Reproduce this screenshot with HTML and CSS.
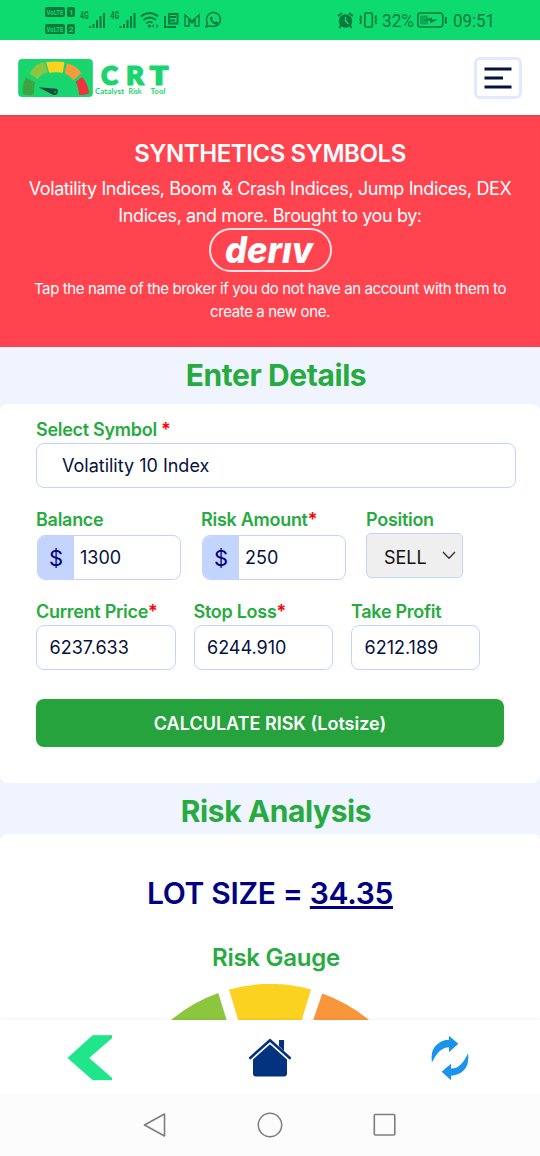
FILE: index.html
```html
<!DOCTYPE html>
<html lang="en">
<head>
  <meta charset="UTF-8">
  <meta name="viewport" content="width=device-width, initial-scale=1.0">
  <title>CRT - Catalyst Risk Tool</title>
  <link rel="stylesheet" href="styles.css">
</head>
<body>
  <div class="status-bar">
    <svg class="status-left" viewBox="0 0 230 40">
      <g fill="#087a3d">
        <rect x="45" y="7" width="20" height="10" rx="2"/>
        <rect x="67" y="7" width="8" height="10" rx="2"/>
        <rect x="45" y="24" width="20" height="10" rx="2"/>
        <rect x="67" y="24" width="8" height="10" rx="2"/>
      </g>
      <g class="volte">
        <text x="46.5" y="15" textLength="17" lengthAdjust="spacingAndGlyphs">VoLTE</text>
        <text x="69" y="15">1</text>
        <text x="46.5" y="32" textLength="17" lengthAdjust="spacingAndGlyphs">VoLTE</text>
        <text x="69" y="32">2</text>
      </g>
      <g class="net">
        <text x="80" y="19" textLength="8.5" lengthAdjust="spacingAndGlyphs">4G</text>
        <text x="110.500" y="19" textLength="8.5" lengthAdjust="spacingAndGlyphs">4G</text>
      </g>
      <path d="M90 28v-2M93.500 28v-4M97 28v-8M100.500 28v-12M104 28v-15M120.500 28v-2M124 28v-4M127.500 28v-8M131 28v-12M134.500 28v-15" stroke="#087a3d" stroke-width="2"/>
      <g fill="none" stroke="#087a3d" stroke-width="1.8">
        <path d="M141 16.500Q149.500 9.500 158 16.500M143.500 20Q149.500 15 156 20M146 23.500Q149.500 20.800 152.500 22.800"/>
        <path d="M165 16v11h11"/>
        <path d="M169 14h8.500v9.500H169z"/>
        <path d="M170 17h6M170 20.500h5"/>
        <path d="M185 26V15l7 6 7-6v11h-4v-6l-3 3-3-3v6z" stroke-width="1.300"/>
        <path d="M206 27l1.400-4a7 7 0 1 1 3 2.800z" stroke-width="1.400"/>
      </g>
      <circle cx="149.500" cy="26" r="1.600" fill="#087a3d"/>
      <path d="M152 26l2-2v4zM158.500 26l-2-2v4z" fill="#087a3d"/>
      <path d="M210 17.500l1.500-1 1.500 2-1 1.200q1 1.800 3 2.600l1.200-1 2 1.300-1 1.900q-2 .6-4.800-1.500-2.800-2.400-2.400-5.500z" fill="#087a3d"/>
    </svg>
    <svg class="status-right" viewBox="330 0 170 40">
      <circle cx="345.500" cy="21" r="6.800" fill="#087a3d"/>
      <path d="M338 16l4-3M353 16l-4-3M341 25l-1.500 3M350 25l1.500 3" stroke="#087a3d" stroke-width="1.800"/>
      <path d="M345.500 17v4l3 3" fill="none" stroke="#0ddb6f" stroke-width="1.400"/>
      <g fill="none" stroke="#087a3d" stroke-width="1.600">
        <rect x="364.800" y="13" width="7.500" height="14" rx="1.200"/>
        <path d="M360 15.500l1.200 2-1.200 2 1.200 2-1.200 2.500M376.500 15.500l-1.200 2 1.200 2-1.200 2 1.200 2.500"/>
        <rect x="417.800" y="13" width="25" height="14" rx="3"/>
      </g>
      <rect x="420" y="15.500" width="8" height="9" rx="1" fill="#0aa954"/>
      <path d="M423 20.500l9-3v2h6l-8 3.800.5-2.800z" fill="#087a3d"/>
      <rect x="444.800" y="17" width="2" height="6.500" fill="#087a3d"/>
      <text class="status-text" x="382" y="27" textLength="32" lengthAdjust="spacingAndGlyphs">32%</text>
      <text class="status-text" x="453" y="27" textLength="42" lengthAdjust="spacingAndGlyphs">09:51</text>
    </svg>
  </div>

  <header class="header">
    <a class="logo" href="#">
      <svg class="logo-gauge" viewBox="54 177 224 114">
        <rect x="54" y="177" width="224" height="114" rx="12" fill="#18d66d"/>
        <path d="M77 233l28 14q-3 12-4 35-12 8-32 0-6-22 8-49z" fill="#3fa33f"/>
        <path d="M109 195q11-6 23-8l11 29q-18 5-30 21l-25-16q7-14 21-26z" fill="#8cc541"/>
        <path d="M138 186q28-3 55 0l-5 32q-20-3-41 0z" fill="#fbd221"/>
        <path d="M200 190q28 7 44 29l-24 22q-10-14-26-21z" fill="#f9993e"/>
        <path d="M246 231q18 22 21 49-12 8-30 4-1-20-10-39z" fill="#f0323d"/>
        <path d="M115 262l55 4q6 5 3 13-4 9-15 5z" fill="#1d4a43"/>
        <circle cx="165" cy="276" r="4" fill="#1e8c57"/>
      </svg>
      <svg class="logo-name" viewBox="0 0 78 40">
        <g class="crt">
          <text x="8" y="27" textLength="17" lengthAdjust="spacingAndGlyphs">C</text>
          <text x="33" y="27" textLength="18" lengthAdjust="spacingAndGlyphs">R</text>
          <text x="56.500" y="27" textLength="19" lengthAdjust="spacingAndGlyphs">T</text>
        </g>
        <g class="tagline">
          <text x="2" y="35.500" textLength="29" lengthAdjust="spacingAndGlyphs">Catalyst</text>
          <text x="35.500" y="35.500" textLength="13" lengthAdjust="spacingAndGlyphs">Risk</text>
          <text x="57.500" y="35.500" textLength="15" lengthAdjust="spacingAndGlyphs">Tool</text>
        </g>
      </svg>
    </a>
    <button class="menu-btn" aria-label="Menu">
      <svg width="28" height="24" viewBox="0 0 28 24"><path d="M0.500 3h27M0.500 12h18.500M0.500 21h27" stroke="#06113c" stroke-width="3"/></svg>
    </button>
  </header>

  <main class="content">
    <section class="broker">
      <h2>SYNTHETICS SYMBOLS</h2>
      <p class="lead">Volatility Indices, Boom &amp; Crash Indices, Jump Indices, DEX Indices, and more. Brought to you by:</p>
      <a class="deriv" href="#" aria-label="deriv">
        <svg width="104" height="40" viewBox="0 0 104 40"><text x="7" y="32.500" textLength="88" lengthAdjust="spacingAndGlyphs">derıv</text></svg>
      </a>
      <p class="note">Tap the name of the broker if you do not have an account with them to create a new one.</p>
    </section>

    <h1 class="section-title">Enter Details</h1>
    <form class="card details">
      <div class="field">
        <label>Select Symbol <span class="req">*</span></label>
        <div class="input symbol">Volatility 10 Index</div>
      </div>
      <div class="row row-money">
        <div class="field">
          <label>Balance</label>
          <div class="input money"><span class="dollar">$</span><span>1300</span></div>
        </div>
        <div class="field">
          <label>Risk Amount<span class="req">*</span></label>
          <div class="input money"><span class="dollar">$</span><span>250</span></div>
        </div>
        <div class="field">
          <label>Position</label>
          <div class="input position">SELL
            <svg width="14" height="9" viewBox="0 0 14 9"><path d="M1 1l6 6.300L13 1" fill="none" stroke="#333" stroke-width="1.300"/></svg>
          </div>
        </div>
      </div>
      <div class="row row-price">
        <div class="field">
          <label>Current Price<span class="req">*</span></label>
          <div class="input">6237.633</div>
        </div>
        <div class="field">
          <label>Stop Loss<span class="req">*</span></label>
          <div class="input">6244.910</div>
        </div>
        <div class="field">
          <label>Take Profit</label>
          <div class="input">6212.189</div>
        </div>
      </div>
      <button class="calc-btn" type="button">CALCULATE RISK (Lotsize)</button>
    </form>

    <h1 class="section-title analysis-title">Risk Analysis</h1>
    <section class="card analysis">
      <h2 class="lot">LOT SIZE = <u>34.35</u></h2>
      <h3 class="gauge-title">Risk Gauge</h3>
      <svg class="gauge" width="310" height="155" viewBox="0 0 310 155">
        <path d="M56 36A155 155 0 0 1 103.300 9L126 83 100 100z" fill="#8cc63f"/>
        <path d="M114 5.500A155 155 0 0 1 196 5.500L173 82h-36z" fill="#fbd220"/>
        <path d="M207.300 9.500A155 155 0 0 1 254 36L210 100l-28-17z" fill="#f9963c"/>
      </svg>
    </section>
  </main>

  <nav class="bottom-nav">
    <a href="#" aria-label="Back">
      <svg width="46" height="46" viewBox="203 75 136 136"><path d="M279 76h57v8l-68 59 68 59v6h-57l-74-65z" fill="#20e58b" stroke="#20e58b" stroke-linejoin="round"/></svg>
    </a>
    <a class="home" href="#" aria-label="Home">
      <svg width="42" height="40" viewBox="0 0 42 40">
        <path d="M21 5.500L38 20v15.500q0 3-3 3H7q-3 0-3-3V20z" fill="#023280"/>
        <path d="M1.200 20L21 2.200 40.800 20" fill="none" stroke="#fff" stroke-width="6"/>
        <path d="M30 8V2h5v11z" fill="#023280"/>
        <path d="M1.200 20L21 2.200 40.800 20" fill="none" stroke="#023280" stroke-width="2.600" stroke-linecap="round" stroke-linejoin="round"/>
      </svg>
    </a>
    <a href="#" aria-label="Refresh">
      <svg width="38" height="46" viewBox="484 75 114 137"><path d="M487 157q-6-37 15-54 15-14 36-14V77l28 24-28 25v-15q-30 0-51 46zM595 129q5 35-14 53-15 14-37 15v13l-28-25 28-24v14q30 1 51-46z" fill="#1b93ec"/></svg>
    </a>
  </nav>

  <div class="system-nav">
    <svg width="24" height="26" viewBox="0 0 24 26"><path d="M21.500 2v22L1.500 13z" fill="none" stroke="#7d7d7d" stroke-width="1.600" stroke-linejoin="round"/></svg>
    <svg width="26" height="26" viewBox="0 0 26 26"><circle cx="13" cy="13" r="11.700" fill="none" stroke="#7d7d7d" stroke-width="1.500"/></svg>
    <svg width="24" height="24" viewBox="0 0 24 24"><rect x="1.300" y="1.500" width="20.500" height="20.500" rx="1" fill="none" stroke="#7d7d7d" stroke-width="1.600"/></svg>
  </div>
</body>
</html>
```
FILE: styles.css
```css
* {
  box-sizing: border-box;
  margin: 0;
  padding: 0;
}

body {
  display: flex;
  flex-direction: column;
  height: 1156px;
  overflow: hidden;
  font-family: Inter, "Liberation Sans", sans-serif;
  background: #f0f4ff;
  color: #06113c;
}

svg {
  display: block;
}

.status-bar {
  display: flex;
  justify-content: space-between;
  flex: none;
  height: 40px;
  padding-right: 40px;
  background: #0ddb6f;
}

.status-left {
  width: 230px;
  height: 40px;
}

.status-right {
  width: 170px;
  height: 40px;
}

.volte text {
  font: bold 8px Roboto, sans-serif;
  fill: #0ddb6f;
}

.net text {
  font: bold 10px Roboto, sans-serif;
  fill: #087a3d;
}

.status-text {
  font: 17.5px Roboto, sans-serif;
  fill: #087a3d;
}

.header {
  display: flex;
  justify-content: space-between;
  align-items: center;
  flex: none;
  height: 75px;
  padding: 0 18px;
  background: #fff;
}

.logo {
  display: flex;
  align-items: center;
}

.logo-gauge {
  width: 75px;
  height: 38px;
}

.logo-name {
  width: 78px;
  height: 40px;
}

.crt text {
  font: 800 27px Lato, sans-serif;
  fill: #18d66d;
  stroke: #18d66d;
  stroke-width: 1.2;
  stroke-linejoin: round;
}

.tagline text {
  font: bold 6.5px Lato, sans-serif;
  fill: #18d66d;
}

.menu-btn {
  display: flex;
  align-items: center;
  justify-content: center;
  width: 48px;
  height: 42px;
  border: 3px solid #e1e9ff;
  border-radius: 6px;
  background: #fff;
}

.content {
  flex: 1;
  min-height: 0;
  overflow: hidden;
}

.broker {
  display: flex;
  flex-direction: column;
  align-items: center;
  height: 232px;
  padding: 20px 24px 0;
  background: #ff444f;
  box-shadow: inset 0 2px 2px -1px #d8404c;
  color: #fff;
  text-align: center;
}

.broker h2 {
  font-size: 24px;
  font-weight: 600;
  line-height: 38px;
  letter-spacing: -0.43px;
}

.lead {
  padding-top: 2px;
  font-size: 18px;
  line-height: 27px;
  letter-spacing: -0.4px;
}

.deriv {
  display: flex;
  align-items: center;
  justify-content: center;
  width: 123px;
  height: 44px;
  margin-top: -1px;
  border: 2px solid rgba(255, 255, 255, 0.85);
  border-radius: 22px;
}

.deriv text {
  font: italic 800 37px Inter, sans-serif;
  fill: #fff;
}

.note {
  padding-top: 6px;
  font-size: 15px;
  line-height: 22.5px;
  letter-spacing: -0.37px;
}

.section-title {
  height: 57px;
  padding-left: 12px;
  color: #27ab40;
  font-size: 30px;
  font-weight: 700;
  line-height: 57px;
  letter-spacing: -0.42px;
  text-align: center;
}

.card {
  border-radius: 8px;
  background: #fff;
}

.details {
  height: 379px;
  padding: 12px 24px 0 36px;
}

label {
  display: block;
  height: 27px;
  color: #27ab40;
  font-size: 18px;
  font-weight: 600;
  line-height: 27px;
  letter-spacing: -0.28px;
}

.req {
  color: #f00;
}

.input {
  display: flex;
  align-items: center;
  height: 45px;
  padding: 0 12px 0 13px;
  border: 1.5px solid #c3d4fc;
  border-radius: 8px;
  font-size: 18px;
}

.symbol {
  padding-left: 25px;
}

.row {
  display: grid;
  margin-top: 18px;
}

.row-money {
  grid-template-columns: 145px 145px 97px;
  column-gap: 20px;
}

.row-money .money {
  margin: 2px 0 0 1px;
  padding: 0;
  gap: 6px;
  overflow: hidden;
}

.dollar {
  display: flex;
  align-items: center;
  justify-content: center;
  width: 36px;
  height: 45px;
  background: #c3d4ff;
  color: #000080;
  font-size: 22px;
}

.position {
  justify-content: space-between;
  padding: 4px 6px 0 17px;
  border-radius: 5px;
  background: #efefef;
  color: #111;
}

.position svg {
  margin-top: -5px;
}

.row-price {
  grid-template-columns: 139.500px 139.500px 129px;
  column-gap: 18px;
}

.row-price .input {
  padding-left: 12.5px;
}

.calc-btn {
  display: block;
  width: 468px;
  height: 48px;
  margin-top: 29px;
  border: 0;
  border-radius: 8px;
  background: #26a33c;
  color: #fff;
  font: 600 18px Inter, sans-serif;
}

.analysis-title {
  height: 51px;
}

.analysis {
  display: flex;
  flex-direction: column;
  align-items: center;
  height: 320px;
  padding-top: 37px;
}

.lot {
  color: #000080;
  font-size: 30px;
  font-weight: 600;
  line-height: 45px;
  letter-spacing: -0.33px;
}

.gauge-title {
  padding: 24px 0 0 12px;
  color: #27ab40;
  font-size: 24px;
  font-weight: 600;
  line-height: 36px;
  letter-spacing: -0.25px;
}

.gauge {
  flex: none;
  margin-top: 8px;
}

.bottom-nav {
  display: flex;
  justify-content: space-between;
  align-items: center;
  flex: none;
  height: 74px;
  padding: 2px 71px 0 67px;
  background: #fff;
  box-shadow: 0 -1px 3px rgba(0, 0, 0, 0.05);
}

.home {
  margin-right: 4px;
}

.system-nav {
  display: flex;
  justify-content: center;
  align-items: center;
  flex: none;
  gap: 90px;
  height: 62px;
  background: #fcfcfc;
}
```
